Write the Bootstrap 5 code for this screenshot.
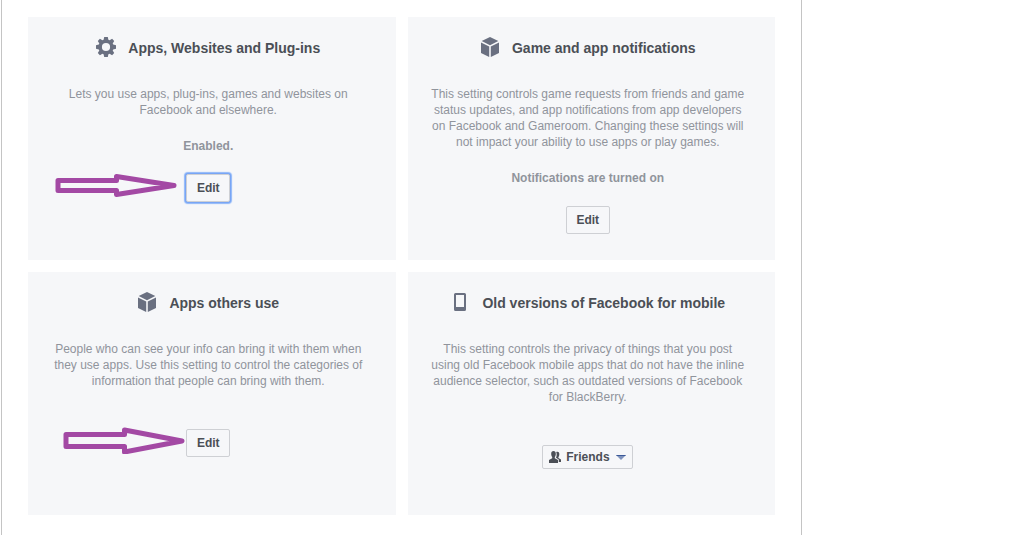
<!DOCTYPE html>
<html lang="en">
<head>
<meta charset="utf-8">
<meta name="viewport" content="width=device-width, initial-scale=1">
<title>App settings</title>
<link href="https://cdn.jsdelivr.net/npm/bootstrap@5.3.0/dist/css/bootstrap.min.css" rel="stylesheet">
<style>
  body { font-family: "Liberation Sans", Arial, sans-serif; font-size: 12px; line-height: 16px; color: #90949c; background: #fff; }
  .settings-panel { max-width: 801px; min-height: 100vh; margin-left: 1px; padding: 17px 26px 20px; border: solid #c4c4c4; border-width: 0 1px; }
  .settings-grid { --bs-gutter-x: 12px; --bs-gutter-y: 12px; }
  .setting { min-height: 243px; padding: 20px 27px 26px 20px; background: #f6f7f9; }
  .setting-title { gap: 12px; margin-bottom: 27px; font-size: 14px; line-height: 22px; font-weight: bold; color: #4b4f56; }
  .setting-title svg { width: 20px; height: 20px; fill: #6a7081; }
  .setting p { margin-bottom: 20px; }
  .setting-action { margin-top: 40px; }
  .btn-edit { --bs-btn-padding-x: 0; --bs-btn-padding-y: 5px; --bs-btn-font-size: 12px; --bs-btn-line-height: 16px; --bs-btn-font-weight: bold; --bs-btn-border-radius: 2px; --bs-btn-color: #4b4f56; --bs-btn-bg: #f6f7f9; --bs-btn-border-color: #ced0d4; width: 44px; }
  .btn-edit.has-ring { box-shadow: 0 0 0 1px #78a5f5, 0 0 1px 2px #8fb6f8; }
  .arrow { right: 100%; top: -3px; width: 124px; height: 28px; fill: none; stroke: #a349a4; stroke-width: 5; stroke-linejoin: round; pointer-events: none; }
  .arrow-first { margin-right: 8px; }
  .audience { color: #4b4f56; }
  .audience select { appearance: none; height: 24px; padding: 0 22px 0 23px; border: 1px solid #ced0d4; border-radius: 2px; background: #f6f7f9; color: inherit; font-weight: bold; font-size: 12px; line-height: 16px; }
  .audience svg { top: 6px; pointer-events: none; }
  .audience .people { left: 7px; }
  .audience .caret { right: 7px; }
</style>
</head>
<body>
<svg class="d-none" aria-hidden="true">
  <symbol id="cube" viewBox="0 0 20 20"><path d="M10 0 18.300 4 10 8.200 1.700 4ZM1 5.400 9.200 9.500V20L1 16ZM19 5.400 10.800 9.500V20L19 16Z"/></symbol>
</svg>
<main class="settings-panel">
  <div class="row settings-grid">
    <section class="col-12 col-sm-6">
      <div class="setting h-100 text-center">
        <h2 class="setting-title d-flex justify-content-center">
          <svg viewBox="0 0 20 20" aria-hidden="true"><path fill-rule="evenodd" d="M8.200 0h3.600l.6 2.800 1.200.5 2.500-1.500 2.100 2.100-1.500 2.500.5 1.200 2.800.6v3.600l-2.800.6-.5 1.200 1.500 2.500-2.100 2.100-2.500-1.500-1.200.5-.6 2.800H8.200l-.6-2.800-1.200-.5-2.500 1.500-2.100-2.100 1.500-2.500-.5-1.200L0 11.800V8.200l2.800-.6.5-1.200-1.500-2.500 2.100-2.100 2.500 1.500 1.200-.5ZM10 5.900a4.100 4.100 0 1 0 0 8.200 4.100 4.100 0 0 0 0-8.200Z"/></svg>
          <span>Apps, Websites and Plug-ins</span>
        </h2>
        <p>Lets you use apps, plug-ins, games and websites on Facebook and elsewhere.</p>
        <p class="fw-bold">Enabled.</p>
        <div class="position-relative d-inline-block">
          <svg class="arrow arrow-first position-absolute" viewBox="0 0 124 28" aria-hidden="true"><path d="M4 9.500H62.500V5.500L120 14.500 62.500 23.500V19.500H4Z"/></svg>
          <button type="button" class="btn btn-edit has-ring d-block">Edit</button>
        </div>
      </div>
    </section>
    <section class="col-12 col-sm-6">
      <div class="setting h-100 text-center">
        <h2 class="setting-title d-flex justify-content-center">
          <svg aria-hidden="true"><use href="#cube"/></svg>
          <span>Game and app notifications</span>
        </h2>
        <p>This setting controls game requests from friends and game status updates, and app notifications from app developers on Facebook and Gameroom. Changing these settings will not impact your ability to use apps or play games.</p>
        <p class="fw-bold">Notifications are turned on</p>
        <button type="button" class="btn btn-edit">Edit</button>
      </div>
    </section>
    <section class="col-12 col-sm-6">
      <div class="setting h-100 text-center">
        <h2 class="setting-title d-flex justify-content-center">
          <svg aria-hidden="true"><use href="#cube"/></svg>
          <span>Apps others use</span>
        </h2>
        <p class="mb-0">People who can see your info can bring it with them when they use apps. Use this setting to control the categories of information that people can bring with them.</p>
        <div class="setting-action position-relative d-inline-block">
          <svg class="arrow position-absolute" viewBox="0 0 124 28" aria-hidden="true"><path d="M4 8.500H62.500V4L120 15 62.500 26V20.500H4Z"/></svg>
          <button type="button" class="btn btn-edit d-block">Edit</button>
        </div>
      </div>
    </section>
    <section class="col-12 col-sm-6">
      <div class="setting h-100 text-center">
        <h2 class="setting-title d-flex justify-content-center">
          <svg viewBox="0 0 20 20" aria-hidden="true"><path fill-rule="evenodd" d="M5.500 1h9A1.500 1.500 0 0 1 16 2.500v15a1.500 1.500 0 0 1-1.500 1.500h-9A1.500 1.500 0 0 1 4 17.500v-15A1.500 1.500 0 0 1 5.500 1ZM6 3v12h8V3Z"/></svg>
          <span>Old versions of Facebook for mobile</span>
        </h2>
        <p class="mb-0">This setting controls the privacy of things that you post using old Facebook mobile apps that do not have the inline audience selector, such as outdated versions of Facebook for BlackBerry.</p>
        <div class="setting-action audience position-relative d-inline-block">
          <svg class="people position-absolute" width="12" height="12" viewBox="0 0 12 12" fill="#4b4f56" aria-hidden="true"><path d="M4.500 0C6 0 6.800 1 6.800 2.800 6.800 4.500 6.300 5.500 5.800 6v1.300L9 9v3H0V9l3.200-1.700V6C2.700 5.500 2.200 4.500 2.200 2.800 2.200 1 3 0 4.500 0ZM7.200 1C9.500.2 10.500 1.500 10.300 3.500 10.200 5 9.700 5.700 9.400 6v1L12 8.500V11H9.800V8.500L7 6.800C7.800 5 8 3 7.200 1Z"/></svg>
          <select class="d-block" aria-label="Audience">
            <option selected>Friends</option>
            <option>Public</option>
          </select>
          <svg class="caret position-absolute" width="10" height="12" viewBox="0 0 10 12" aria-hidden="true"><path fill="#7f93bd" d="M0 4h10L5 9Z"/><path fill="#3b5998" d="M0 4h10l-1 1H1Z"/></svg>
        </div>
      </div>
    </section>
  </div>
</main>
<script src="https://cdn.jsdelivr.net/npm/bootstrap@5.3.0/dist/js/bootstrap.bundle.min.js"></script>
</body>
</html>
